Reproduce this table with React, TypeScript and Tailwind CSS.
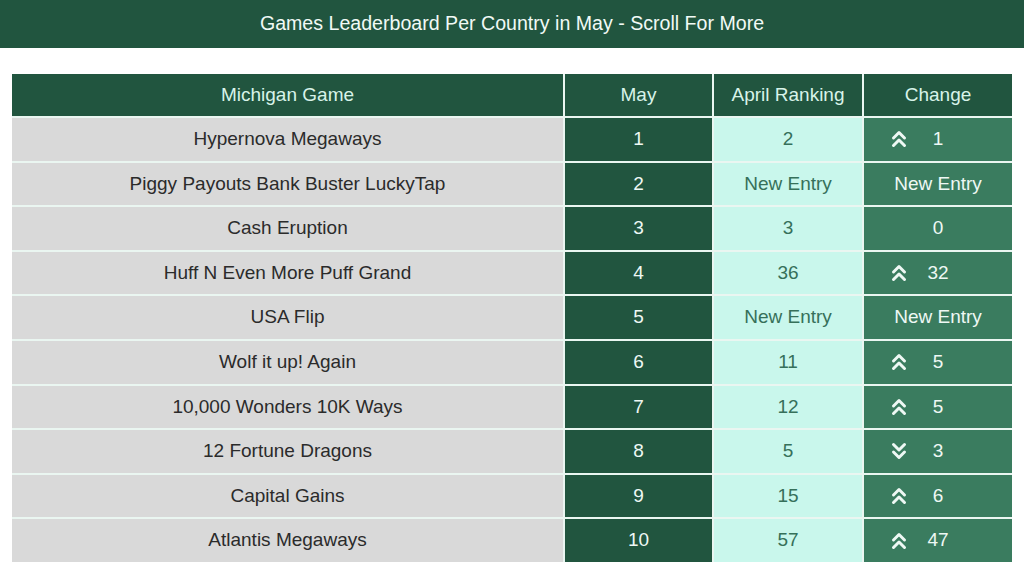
type Row = {
  game: string;
  may: number;
  april: string;
  change: string;
  dir?: 'up' | 'down';
};

const rows: Row[] = [
  { game: 'Hypernova Megaways', may: 1, april: '2', change: '1', dir: 'up' },
  { game: 'Piggy Payouts Bank Buster LuckyTap', may: 2, april: 'New Entry', change: 'New Entry' },
  { game: 'Cash Eruption', may: 3, april: '3', change: '0' },
  { game: 'Huff N Even More Puff Grand', may: 4, april: '36', change: '32', dir: 'up' },
  { game: 'USA Flip', may: 5, april: 'New Entry', change: 'New Entry' },
  { game: 'Wolf it up! Again', may: 6, april: '11', change: '5', dir: 'up' },
  { game: '10,000 Wonders 10K Ways', may: 7, april: '12', change: '5', dir: 'up' },
  { game: '12 Fortune Dragons', may: 8, april: '5', change: '3', dir: 'down' },
  { game: 'Capital Gains', may: 9, april: '15', change: '6', dir: 'up' },
  { game: 'Atlantis Megaways', may: 10, april: '57', change: '47', dir: 'up' },
];

function Chevrons({ dir }: { dir: 'up' | 'down' }) {
  return (
    <svg
      viewBox="0 0 16 18"
      className={`absolute left-[27px] top-1/2 -translate-y-1/2 w-[16px] h-[18px] ${dir === 'down' ? 'rotate-180' : ''}`}
      fill="none"
      stroke="currentColor"
      strokeWidth={3}
      strokeLinecap="round"
      strokeLinejoin="round"
    >
      <path d="M2.5 8 L8 2.5 L13.5 8" />
      <path d="M2.5 15.5 L8 10 L13.5 15.5" />
    </svg>
  );
}

export default function App() {
  return (
    <div className="w-[1024px] h-[574px] bg-white font-['Liberation_Sans',Arial,sans-serif]">
      <div className="h-[48px] bg-[#21553f] flex items-center justify-center">
        <h1 className="text-[19.6px] text-[#f1faf6]">
          Games Leaderboard Per Country in May - Scroll For More
        </h1>
      </div>

      <div className="px-[12px] pt-[26px]">
        <div className="grid grid-cols-[551px_147px_148px_148px] gap-[2px] bg-[#eaf6f1]">
          {['Michigan Game', 'May', 'April Ranking', 'Change'].map((h) => (
            <div
              key={h}
              className="h-[42px] bg-[#21553f] flex items-center justify-center text-[19px] text-[#d8f3e9]"
            >
              {h}
            </div>
          ))}

          {rows.map((r) => (
            <>
              <div
                key={r.game}
                className="h-[42.6px] bg-[#d9d9d9] flex items-center justify-center text-[19px] text-[#2b2b2b]"
              >
                {r.game}
              </div>
              <div className="h-[42.6px] bg-[#21553f] flex items-center justify-center text-[19px] text-[#eef8f4]">
                {r.may}
              </div>
              <div className="h-[42.6px] bg-[#c9f7ec] flex items-center justify-center text-[19px] text-[#36705a]">
                {r.april}
              </div>
              <div className="relative h-[42.6px] bg-[#3a7c5f] flex items-center justify-center text-[19px] text-[#eef8f4]">
                {r.dir && <Chevrons dir={r.dir} />}
                {r.change}
              </div>
            </>
          ))}
        </div>
      </div>
    </div>
  );
}
